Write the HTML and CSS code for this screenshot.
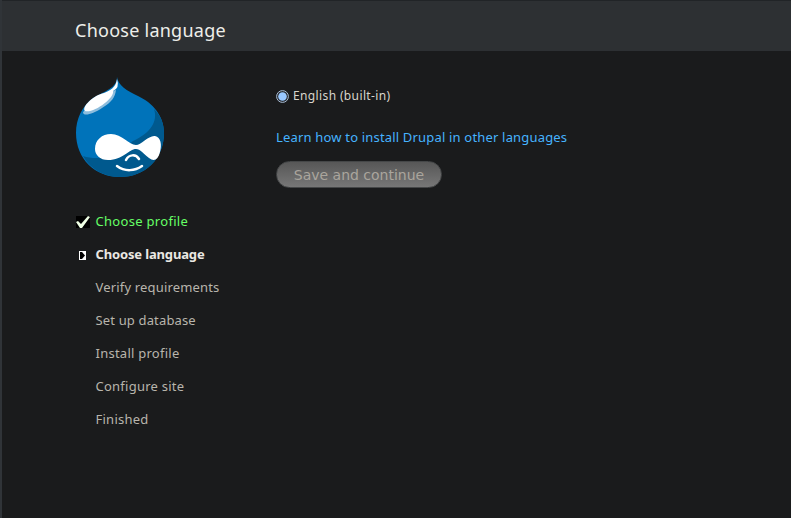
FILE: index.html
```html
<!DOCTYPE html>
<html lang="en">
<head>
<meta charset="utf-8">
<title>Choose language</title>
<link rel="stylesheet" href="styles.css">
</head>
<body>
<header class="header"><h1>Choose language</h1></header>
<div class="page">
  <aside class="sidebar">
    <svg class="logo" viewBox="0 0 88 101" width="88" height="101" aria-hidden="true">
      <path fill="#0073ba" d="M41 0C42 8 51 14 62 19C77 26 88 39 88 56C88 82 69 100 44 100C19 100 0 82 0 56C0 42 6 29 17 21C29 14 41 11 41 0Z"/>
      <path fill="#00598e" d="M78 32C85 39 88 47 88 56C88 82 69 100 44 100C28 100 14 92 7 79C15 82 26 81 36 80L57 64C75 56 82 44 78 32Z"/>
      <path fill="#8dbddd" d="M7 35C7 40 17 37 26 31C36 25 39 20 40 13L33 15Z"/>
      <path fill="#fff" d="M9 34C5 30 18 18 28 16C38 12 40 8 41 2Q44 11 37 14C39 21 17 37 9 34Z"/>
      <path fill="#fff" d="M35 57C46 57 53 68 60 68C65 68 73 58 79 59C85 60 86 68 84 75C82 83 78 85 73 81C68 77 64 72 60 72C53 72 47 83 32 83C24 83 19 78 19 72C19 63 26 57 35 57Z"/>
      <path fill="none" stroke="#fff" stroke-width="2.5" stroke-linecap="round" d="M50 83C53 77 60 77 63 82M41 89C49 95 59 94 66 89"/>
    </svg>
    <ol class="tasks">
      <li class="done"><svg class="mark" viewBox="0 0 14 12" width="14" height="12"><path fill="#000" d="M0 0h14v12H0z"/><path fill="#efffe5" d="M0 6L2 5L5 8L12 0L14 1L6 12H4z"/></svg><span>Choose profile</span></li>
      <li class="active"><svg class="mark arrow" viewBox="0 0 7 9" width="7" height="9"><path fill="#fff" d="M0 0h7v9H0z"/><path fill="#000" d="M1 1H3L6 4.5L3 8H1z"/></svg><span>Choose language</span></li>
      <li class="verify">Verify requirements</li>
      <li class="database">Set up database</li>
      <li>Install profile</li>
      <li>Configure site</li>
      <li>Finished</li>
    </ol>
  </aside>
  <main class="content">
    <label class="option"><svg width="13" height="13" viewBox="0 0 13 13"><circle cx="6.5" cy="6.5" r="5.9" fill="#25282b" stroke="#a9bdd6"/><circle cx="6.5" cy="6.5" r="4.3" fill="#99c8ff"/></svg><span>English (built-in)</span></label>
    <a class="help">Learn how to install Drupal in other languages</a>
    <button class="save" type="button">Save and continue</button>
  </main>
</div>
</body>
</html>
```
FILE: styles.css
```css
* { box-sizing: border-box; }
body {
  margin: 0;
  height: 518px;
  overflow: hidden;
  border-left: 2px solid #303438;
  background: #1a1b1c;
  color: #b8b5ac;
  font: 13px/18px "Noto Sans", sans-serif;
}
.header {
  height: 51px;
  padding: 16px 0 0 73px;
  border-top: 1px solid #212427;
  background: #2d3033;
}
h1 {
  margin: 0;
  color: #eeeeea;
  font-size: 18px;
  font-weight: 400;
  line-height: 26px;
  letter-spacing: 0.25px;
}
.page { display: flex; padding-left: 74px; }
.sidebar { width: 200px; padding-top: 26px; }
.logo { display: block; }
.tasks { list-style: none; margin: 34px 0 0; padding: 0; }
.tasks li {
  display: flex;
  align-items: center;
  height: 18px;
  margin-bottom: 15px;
  padding-left: 19.5px;
  white-space: nowrap;
  letter-spacing: 0.25px;
}
.mark { flex: none; margin: 2px 5.5px 0 -19.5px; }
.mark.arrow { margin: 2px 9.5px 0 -16.5px; }
.tasks .done { color: #66ff66; letter-spacing: 0.3px; }
.tasks .active { color: #eae8e3; font-weight: 700; letter-spacing: -0.15px; }
.tasks .verify { letter-spacing: 0.17px; }
.tasks .database { letter-spacing: 0.15px; }
.content { display: flex; flex-direction: column; align-items: flex-start; padding-top: 36px; }
.option {
  display: flex;
  align-items: center;
  gap: 4px;
  height: 18px;
  color: #d8d5cb;
  font-size: 12px;
  letter-spacing: 0.37px;
}
.help { margin-top: 23px; color: #46b3ff; letter-spacing: 0.18px; white-space: nowrap; }
.save {
  width: 166px;
  height: 27px;
  margin-top: 15px;
  padding: 0;
  border: 1px solid #454748;
  border-radius: 14px;
  background: linear-gradient(#575757, #777);
  color: #aaa59d;
  font: 14px/24px "DejaVu Sans", sans-serif;
}
```
